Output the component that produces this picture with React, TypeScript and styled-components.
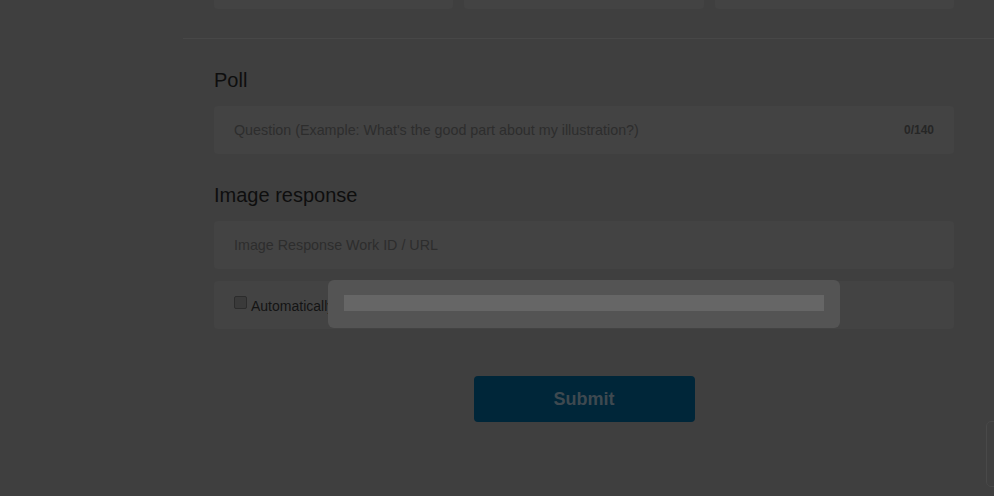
import * as React from 'react';
import styled, { createGlobalStyle } from 'styled-components';

const GlobalStyle = createGlobalStyle`
  html, body {
    margin: 0;
    padding: 0;
    background: #3f3f3f;
    font-family: "Liberation Sans", Arial, sans-serif;
  }
`;

export default function App() {
    return <Page>
        <GlobalStyle />
        <Sidebar />
        <Main>
            <CardRow>
                <TopCard />
                <TopCard />
                <TopCard />
            </CardRow>
            <Divider />
            <Section>
                <Heading>Poll</Heading>
                <Field>
                    <Placeholder>Question (Example: What's the good part about my illustration?)</Placeholder>
                    <Counter>0/140</Counter>
                </Field>
            </Section>
            <Section>
                <Heading>Image response</Heading>
                <Field>
                    <Placeholder>Image Response Work ID / URL</Placeholder>
                </Field>
                <CheckRow>
                    <Box />
                    <CheckLabel>Automatically</CheckLabel>
                </CheckRow>
            </Section>
            <SubmitWrap>
                <SubmitButton>Submit</SubmitButton>
            </SubmitWrap>
        </Main>

        {/* loading dialog over the dimmed page */}
        <Loader>
            <LoaderBar />
        </Loader>
        <SideTab />
    </Page>;
}

//Style Components
const Page = styled.div`
  display: grid;
  grid-template-columns: 183px 1fr;
  width: 994px;
  height: 496px;
  overflow: hidden;
  background: #3f3f3f;
`;

const Sidebar = styled.div``;

const Main = styled.div`
  display: flex;
  flex-direction: column;
`;

const CardRow = styled.div`
  display: grid;
  grid-template-columns: repeat(3, 1fr);
  gap: 11px;
  padding: 0 40px 0 31px;
`;

const TopCard = styled.div`
  height: 9px;
  background: #434343;
  border-radius: 0 0 4px 4px;
`;

const Divider = styled.div`
  margin-top: 29px;
  height: 1px;
  background: #474747;
`;

const Section = styled.div`
  display: flex;
  flex-direction: column;
  gap: 12px;
  padding: 0 40px 0 31px;
  margin-top: 31px;
`;

const Heading = styled.h2`
  margin: 0 0 4px;
  font-size: 20px;
  font-weight: normal;
  line-height: 20px;
  color: #0e0e0e;
`;

const Field = styled.div`
  display: flex;
  align-items: center;
  justify-content: space-between;
  height: 48px;
  padding: 0 20px;
  box-sizing: border-box;
  background: #434343;
  border-radius: 4px;
`;

const Placeholder = styled.span`
  font-size: 14.3px;
  color: #2d2d2d;
`;

const Counter = styled.span`
  font-size: 12px;
  font-weight: bold;
  color: #262626;
`;

const CheckRow = styled.div`
  display: flex;
  align-items: center;
  gap: 4px;
  height: 48px;
  padding: 0 20px;
  box-sizing: border-box;
  background: #434343;
  border-radius: 4px;
`;

const Box = styled.span`
  width: 11px;
  height: 11px;
  margin-top: -6px;
  border: 1px solid #2c2c2c;
  border-radius: 2px;
  background: #3a3a3a;
`;

const CheckLabel = styled.span`
  font-size: 14px;
  color: #141414;
  margin-top: 1px;
`;

const SubmitWrap = styled.div`
  display: flex;
  justify-content: center;
  padding: 0 40px 0 31px;
  margin-top: 47px;
`;

const SubmitButton = styled.button`
  width: 221px;
  height: 46px;
  border: none;
  border-radius: 4px;
  background: #002639;
  color: #3e4950;
  font-family: "Liberation Sans", Arial, sans-serif;
  font-size: 18px;
  font-weight: bold;
`;

const Loader = styled.div`
  position: fixed;
  left: 328px;
  top: 280px;
  width: 512px;
  height: 48px;
  padding: 15px 16px 0;
  box-sizing: border-box;
  background: #545454;
  border-radius: 6px;
`;

const LoaderBar = styled.div`
  height: 16px;
  background: #666666;
`;

const SideTab = styled.div`
  position: fixed;
  right: -6px;
  top: 421px;
  width: 12px;
  height: 64px;
  border: 1px solid #494949;
  border-radius: 5px;
  background: #3f3f3f;
`;
